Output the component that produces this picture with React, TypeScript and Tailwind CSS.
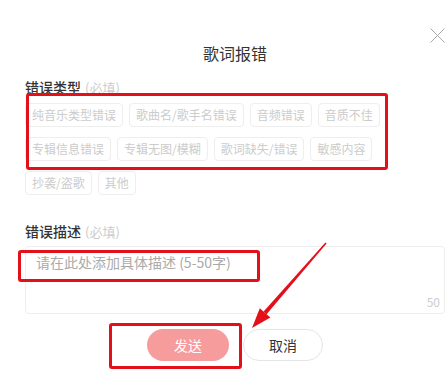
import React from "react";

const row = ["纯音乐类型错误", "歌曲名/歌手名错误", "音频错误", "音质不佳", "专辑信息错误", "专辑无图/模糊", "歌词缺失/错误", "敏感内容", "抄袭/盗歌", "其他"];

export default function App() {
  return (
    <div
      className="relative w-[448px] h-[387px] bg-white overflow-hidden pl-[25px] pr-[3px]"
      style={{ fontFamily: '"Noto Sans CJK SC", "Noto Sans", sans-serif' }}
    >
      <div className="pt-[41px] text-center text-[16px] leading-[24px] text-[#333]">歌词报错</div>

      <div className="mt-[12px] text-[14px] leading-[20px] text-[#333] font-medium">
        错误类型<span className="ml-[4px] text-[13px] font-normal text-[#ccc]">(必填)</span>
      </div>

      <div className="mt-[5px] w-[400px] flex flex-wrap gap-x-[6px] gap-y-[10px]">
        {row.map((t) => (
          <div key={t} className="h-[24px] px-[6px] border border-[#eee] rounded-[4px] text-[12px] leading-[22px] text-[#ccc]">
            {t}
          </div>
        ))}
      </div>

      <div className="mt-[26px] text-[14px] leading-[20px] text-[#333] font-medium">
        错误描述<span className="ml-[4px] text-[13px] font-normal text-[#ccc]">(必填)</span>
      </div>

      <div className="relative mt-[4px] h-[68px] border border-[#eee] rounded-[4px] pl-[10px] pt-[5px] text-[14px] leading-[20px] text-[#aaa]">
        请在此处添加具体描述 (5-50字)
        <span className="absolute right-[4px] bottom-[4px] text-[12px] leading-[14px] text-[#ccc]">50</span>
      </div>

      <div className="mt-[15px] flex justify-center gap-[14px]">
        <div className="w-[82px] h-[32px] rounded-full bg-[#f79c9c] text-white text-[14px] leading-[32px] text-center">发送</div>
        <div className="w-[80px] h-[32px] rounded-full border border-[#e5e5e5] bg-white text-[#333] text-[14px] leading-[30px] text-center">取消</div>
      </div>

      {/* close */}
      <svg className="absolute left-[430px] top-[28px]" width="15" height="15" viewBox="0 0 15 15">
        <path d="M0.5 0.5 L14.5 14.5 M14.5 0.5 L0.5 14.5" stroke="#aaa" strokeWidth="1" fill="none" />
      </svg>

      {/* red annotations */}
      <div className="absolute left-[26px] top-[93px] w-[362px] h-[77px] border-[3px] border-[#e3101a] rounded-[3px] pointer-events-none" />
      <div className="absolute left-[18px] top-[250px] w-[242px] h-[32px] border-[3px] border-[#e3101a] rounded-[3px] pointer-events-none" />
      <div className="absolute left-[109px] top-[323px] w-[133px] h-[46px] border-[3px] border-[#e3101a] rounded-[3px] pointer-events-none" />
      <svg className="absolute left-0 top-0 pointer-events-none" width="448" height="387" viewBox="0 0 448 387">
        <polygon points="326.6,243.5 325.4,242.5 263.6,311.6 266.6,314.2" fill="#e3101a" />
        <polygon points="252,328 259.8,308.3 270.4,317.5" fill="#e3101a" />
      </svg>
    </div>
  );
}
